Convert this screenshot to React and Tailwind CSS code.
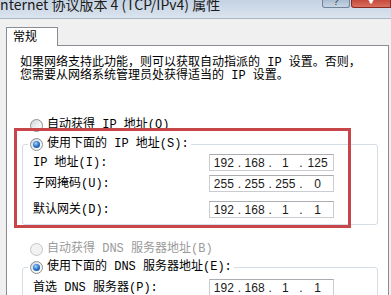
const MONO = "font-['Liberation_Mono','Noto_Sans_CJK_SC',monospace]"

function Radio({ checked, disabled }) {
  return (
    <span
      className={`flex h-[13px] w-[13px] flex-none items-center justify-center rounded-full border ${
        disabled
          ? 'border-[#c4c4c4] bg-[#f2f2f2]'
          : 'border-[#8c8f94] bg-gradient-to-br from-[#cfd2d6] via-[#eceef0] to-white'
      }`}
    >
      {checked && (
        <span className="h-[7px] w-[7px] rounded-full bg-[radial-gradient(circle_at_40%_35%,#a8d8ff,#2f7ad0_45%,#0d3b78)]" />
      )}
    </span>
  )
}

function IpBox({ parts }) {
  return (
    <div className="flex h-[17px] w-[125px] items-center border border-[#c9ccd1] border-t-[#abadb3] bg-white font-['Liberation_Sans',sans-serif] text-[12px] leading-none text-[#1a1a1a]">
      {parts.map((p, i) => (
        <div key={i} className="flex flex-1 items-center">
          <span className="flex-1 text-center">{p}</span>
          {i < 3 && <span className="w-[3px] flex-none text-center">.</span>}
        </div>
      ))}
    </div>
  )
}

function Row({ label, parts, className = '' }) {
  return (
    <div className={`flex items-center pl-[5px] ${className}`}>
      <span className="w-[176px] leading-[14px]">{label}</span>
      <IpBox parts={parts} />
    </div>
  )
}

export default function App() {
  return (
    <div className={`relative h-[295px] w-[391px] overflow-hidden bg-[#f0f0f0] text-[12px] text-black ${MONO}`}>
      {/* title bar */}
      <div className="flex h-[19px] items-start justify-between border-b border-[#a9b6c4] bg-gradient-to-b from-[#c4d2e2] to-[#dbe4ee]">
        <span className="-mt-[3px] -ml-[4px] font-['Noto_Sans_CJK_SC',sans-serif] text-[14px] leading-[15px] text-[#1b1b1b]">
          Internet 协议版本 4 (TCP/IPv4) 属性
        </span>
        <div className="flex h-[8px]">
          <div className="flex h-[8px] w-[28px] items-end justify-center overflow-hidden rounded-b-[3px] border border-t-0 border-[#6f8299] bg-gradient-to-b from-[#a9bdd3] to-[#c9d6e4]">
            <span className="font-['Liberation_Sans',sans-serif] text-[10px] leading-[10px] text-[#2b3440]">?</span>
          </div>
          <div className="ml-px flex h-[8px] w-[40px] items-end justify-center overflow-hidden rounded-bl-[3px] border border-t-0 border-[#8a2a22] bg-gradient-to-b from-[#c44a3c] to-[#d9705e]">
            <svg width="10" height="6" viewBox="0 0 10 6" className="mb-[1px]">
              <path d="M1 -3 L6 3 M9 -3 L4 3" stroke="white" strokeWidth="2" />
            </svg>
          </div>
        </div>
      </div>

      <div className="pl-[6px] pr-[2px] pt-[8px]">
        {/* tab */}
        <div className="relative z-10 -mb-px h-[19px] w-[52px] border border-b-0 border-[#898c95] bg-white pl-[6px] font-['Noto_Sans_CJK_SC',sans-serif] leading-[15px]">
          常规
        </div>

        {/* panel */}
        <div className="h-[260px] border border-[#898c95] bg-white pt-[11px]">
          <p className="pl-[13px] leading-[13px]">
            如果网络支持此功能，则可以获取自动指派的 IP 设置。否则，
            <br />
            您需要从网络系统管理员处获得适当的 IP 设置。
          </p>

          <div className="mt-[35px] flex h-[14px] items-center gap-[4px] pl-[23px]">
            <Radio />
            <span>自动获得 IP 地址(O)</span>
          </div>

          <fieldset className="mt-[5px] ml-[15px] mr-[10px] rounded-[3px] border border-[#d5dde5] pb-[6px] pl-[5px]">
            <legend className="flex h-[14px] items-center gap-[4px] px-[2px]">
              <Radio checked />
              <span>使用下面的 IP 地址(S):</span>
            </legend>
            <Row className="mt-[3px]" label="IP 地址(I):" parts={['192', '168', '1', '125']} />
            <Row className="mt-[4px]" label="子网掩码(U):" parts={['255', '255', '255', '0']} />
            <Row className="mt-[9px]" label="默认网关(D):" parts={['192', '168', '1', '1']} />
          </fieldset>

          <div className="mt-[17px] flex h-[14px] items-center gap-[4px] pl-[23px] text-[#9a9a9a]">
            <Radio disabled />
            <span>自动获得 DNS 服务器地址(B)</span>
          </div>

          <fieldset className="mt-[4px] ml-[15px] mr-[10px] h-[60px] rounded-[3px] border border-[#d5dde5] pl-[5px]">
            <legend className="flex h-[14px] items-center gap-[4px] px-[2px]">
              <Radio checked />
              <span>使用下面的 DNS 服务器地址(E):</span>
            </legend>
            <Row className="mt-[5px]" label="首选 DNS 服务器(P):" parts={['192', '168', '1', '1']} />
          </fieldset>
        </div>
      </div>

      {/* red annotation box */}
      <div className="pointer-events-none absolute left-[14px] top-[128px] h-[100px] w-[337px] border-[3px] border-[#c8464a]" />
    </div>
  )
}
